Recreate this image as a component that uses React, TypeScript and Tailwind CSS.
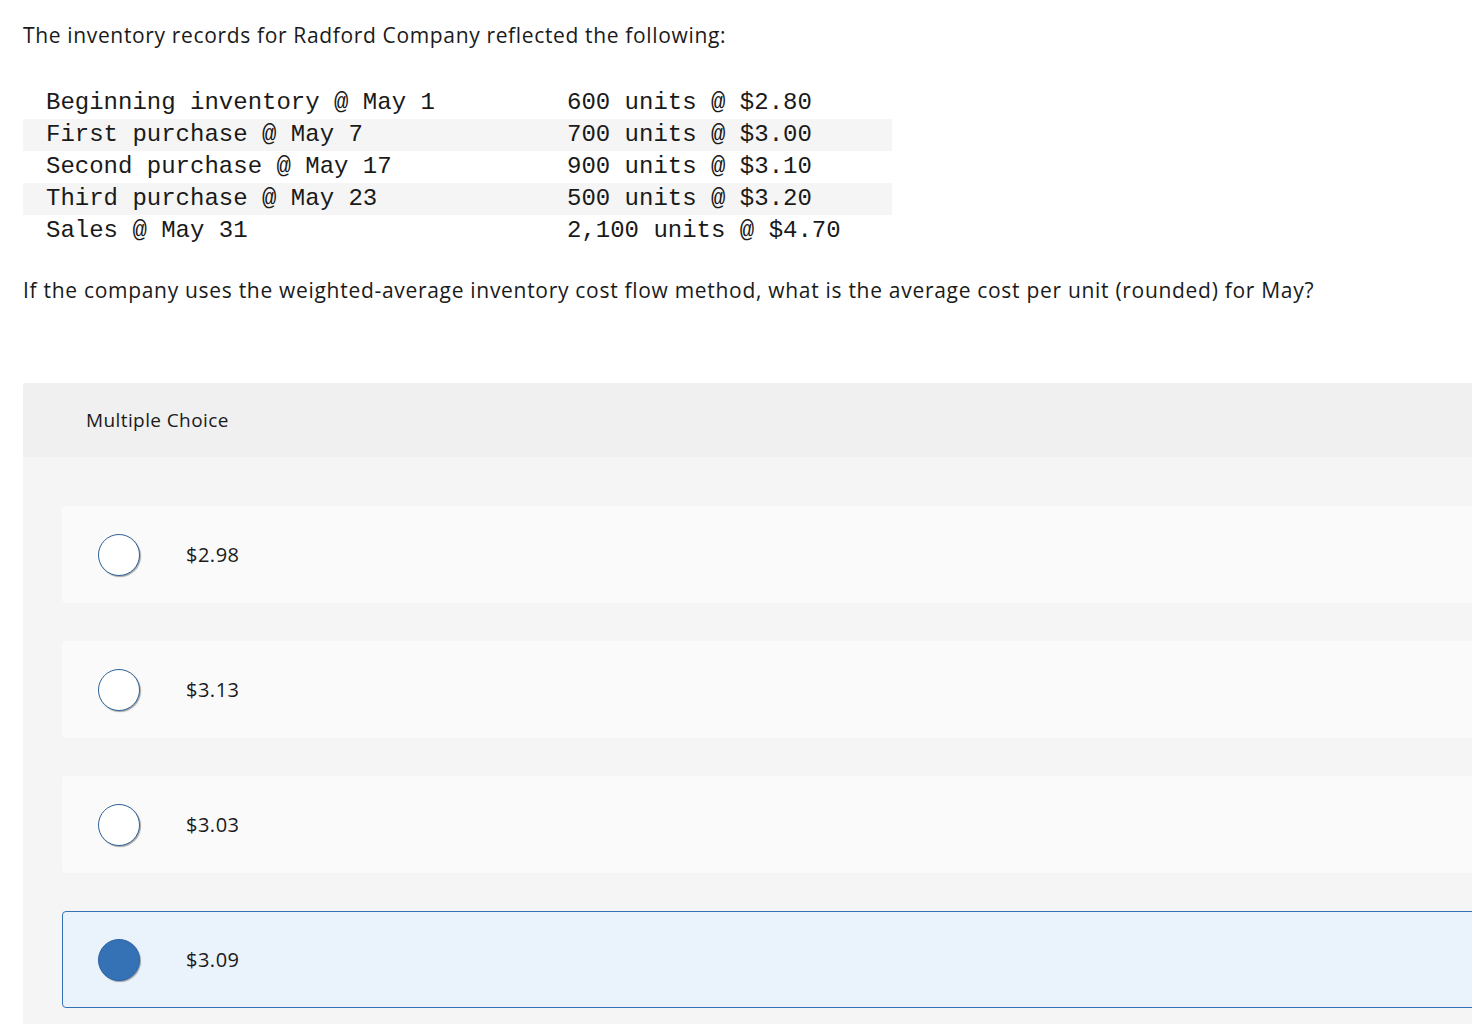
import React from "react";

const rows: [string, string][] = [
  ["Beginning inventory @ May 1", "600 units @ $2.80"],
  ["First purchase @ May 7", "700 units @ $3.00"],
  ["Second purchase @ May 17", "900 units @ $3.10"],
  ["Third purchase @ May 23", "500 units @ $3.20"],
  ["Sales @ May 31", "2,100 units @ $4.70"],
];

const options = ["$2.98", "$3.13", "$3.03", "$3.09"];
const selected = 3;

export default function App() {
  return (
    <div className="w-[1472px] h-[1024px] overflow-hidden bg-white text-[#1a1a1a]" style={{ fontFamily: '"Open Sans", "Liberation Sans", sans-serif' }}>
      <div className="pl-[23px] pt-[21px]">
        <p className="text-[21px] leading-[28px] tracking-[0.65px]">The inventory records for Radford Company reflected the following:</p>
        <table className="mt-[38px] border-collapse w-[869px] text-[24px] leading-[32px]" style={{ fontFamily: '"Liberation Mono", "Courier New", monospace' }}>
          <tbody>
            {rows.map((r, i) => (
              <tr key={i} className={i % 2 === 1 ? "bg-[#f5f5f5]" : ""}>
                <td className="pl-[23px] w-[544px] h-[32px] whitespace-pre">{r[0]}</td>
                <td className="whitespace-pre">{r[1]}</td>
              </tr>
            ))}
          </tbody>
        </table>
        <p className="mt-[29px] text-[21px] leading-[28px] tracking-[0.7px]">If the company uses the weighted-average inventory cost flow method, what is the average cost per unit (rounded) for May?</p>
        <div className="mt-[79px] w-[1480px] rounded-tl-[4px] bg-[#f5f5f5] pb-[40px]">
          <div className="h-[74px] bg-[#f0f0f0] rounded-tl-[4px] flex items-center pl-[63px] text-[19px] tracking-[0.4px]">Multiple Choice</div>
          <div className="pl-[39px] pt-[49px] flex flex-col gap-[38px]">
            {options.map((o, i) => {
              const sel = i === selected;
              return (
                <div key={i} className={`h-[97px] rounded-[4px] flex items-center ${sel ? "bg-[#eaf2fb] border border-[#3572b5]" : "bg-[#fafafa] border border-transparent"}`}>
                  <div className={`ml-[35px] w-[42px] h-[42px] rounded-full ${sel ? "bg-[#3572b5] border border-[#2b63a8]" : "bg-white border-[1.5px] border-[#2f6398]"} shadow-[1px_1px_1px_rgba(0,0,0,0.35)]`} />
                  <span className="ml-[46px] text-[20px] tracking-[0.5px]">{o}</span>
                </div>
              );
            })}
          </div>
        </div>
      </div>
    </div>
  );
}
